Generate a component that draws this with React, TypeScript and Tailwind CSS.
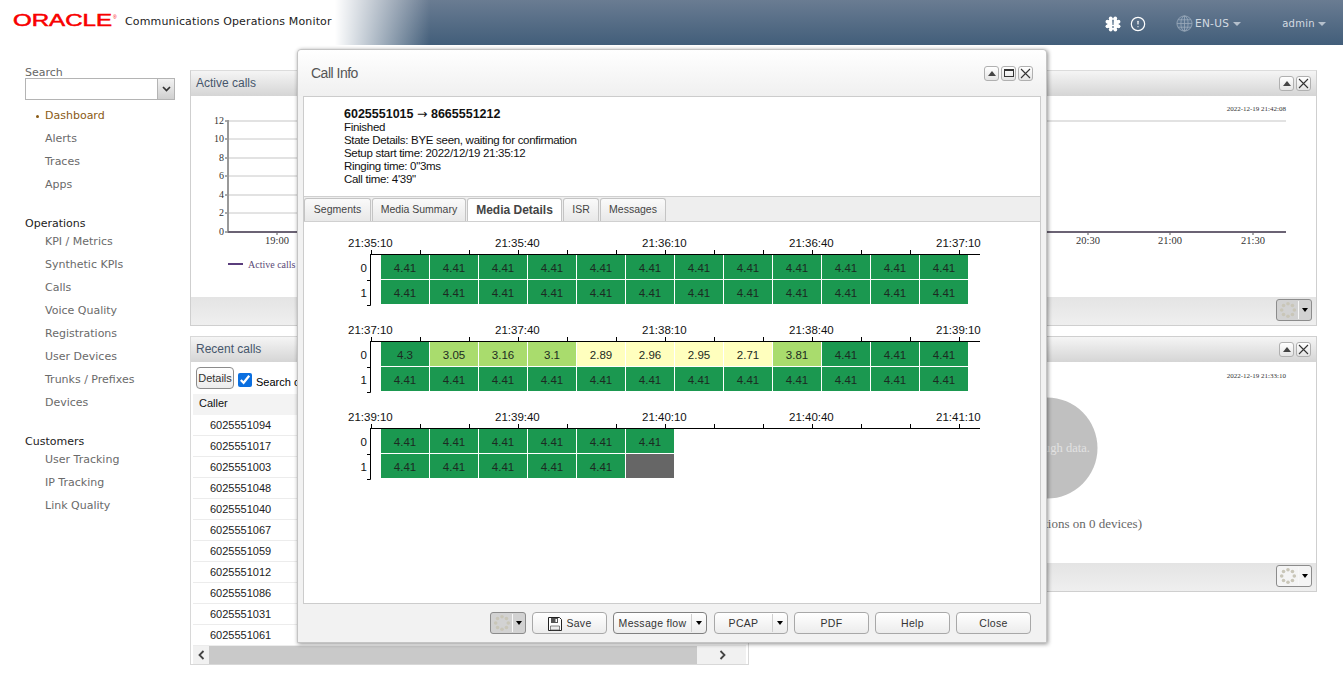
import { CircleAlert } from 'lucide-react'

const navMain = ['Alerts', 'Traces', 'Apps']
const navOps = ['KPI / Metrics', 'Synthetic KPIs', 'Calls', 'Voice Quality', 'Registrations', 'User Devices', 'Trunks / Prefixes', 'Devices']
const navCustomers = ['User Tracking', 'IP Tracking', 'Link Quality']
const callers = ['6025551094', '6025551017', '6025551003', '6025551048', '6025551040', '6025551067', '6025551059', '6025551012', '6025551086', '6025551031', '6025551061']

type Cell = { v: string; c: 'good' | 'mid' | 'low' | 'none' }

const good = (n: number): Cell[] => Array.from({ length: n }, () => ({ v: '4.41', c: 'good' as const }))

const blocks: { labels: string[]; rows: Cell[][] }[] = [
  {
    labels: ['21:35:10', '21:35:40', '21:36:10', '21:36:40', '21:37:10'],
    rows: [good(12), good(12)],
  },
  {
    labels: ['21:37:10', '21:37:40', '21:38:10', '21:38:40', '21:39:10'],
    rows: [
      [
        { v: '4.3', c: 'good' },
        { v: '3.05', c: 'mid' },
        { v: '3.16', c: 'mid' },
        { v: '3.1', c: 'mid' },
        { v: '2.89', c: 'low' },
        { v: '2.96', c: 'low' },
        { v: '2.95', c: 'low' },
        { v: '2.71', c: 'low' },
        { v: '3.81', c: 'mid' },
        ...good(3),
      ],
      good(12),
    ],
  },
  {
    labels: ['21:39:10', '21:39:40', '21:40:10', '21:40:40', '21:41:10'],
    rows: [good(6), [...good(5), { v: '', c: 'none' }]],
  },
]

const cellColor = {
  good: 'bg-[#1b9850]',
  mid: 'bg-[#a9dc6d]',
  low: 'bg-[#ffffbe]',
  none: 'bg-[#666666]',
}

function Spinner({ size = 20 }: { size?: number }) {
  const dots = [0, 45, 90, 135, 180, 225, 270, 315]
  return (
    <svg width={size} height={size} viewBox="0 0 20 20">
      {dots.map(a => (
        <circle
          key={a}
          cx={10 + 7 * Math.cos((a * Math.PI) / 180)}
          cy={10 + 7 * Math.sin((a * Math.PI) / 180)}
          r="2"
          fill="#c9c6b8"
        />
      ))}
    </svg>
  )
}

function Caret() {
  return <span className="h-0 w-0 border-x-[3px] border-t-[4px] border-x-transparent border-t-black" />
}

function GearButton({ active }: { active?: boolean }) {
  return (
    <button className={`flex h-[22px] w-[36px] items-center rounded-[3px] border border-[#8c8c8c] ${active ? 'bg-[#d2d2d2]' : 'bg-[#f4f4f4]'}`}>
      <span className="flex w-[21px] justify-center">
        <Spinner size={18} />
      </span>
      <span className="h-[18px] w-px bg-[#f8f8f8]" />
      <span className="flex flex-1 justify-center">
        <Caret />
      </span>
    </button>
  )
}

function WinButton({ kind }: { kind: 'up' | 'max' | 'close' }) {
  return (
    <span className="flex h-[15px] w-[15px] items-center justify-center rounded-[3px] border border-[#b0b0b0] bg-gradient-to-b from-white to-[#e4e4e4]">
      {kind === 'up' && <span className="h-0 w-0 border-x-[4px] border-b-[5px] border-x-transparent border-b-[#444]" />}
      {kind === 'max' && <span className="h-[8px] w-[10px] border border-t-2 border-[#333]" />}
      {kind === 'close' && (
        <svg width="11" height="11" viewBox="0 0 11 11">
          <path d="M1 1l9 9M10 1l-9 9" stroke="#333" strokeWidth="1.1" />
        </svg>
      )}
    </span>
  )
}

function PanelTitle({ title }: { title: string }) {
  return (
    <div className="flex h-[25px] items-center justify-between bg-gradient-to-b from-[#f5f5f5] to-[#d5d5d5] px-[5px]">
      <span className="pb-[2px] font-['Liberation_Sans'] text-[12px] text-[#46566b]">{title}</span>
      <span className="flex gap-[2px]">
        <WinButton kind="up" />
        <WinButton kind="close" />
      </span>
    </div>
  )
}

function PanelFooter({ active }: { active?: boolean }) {
  return (
    <div className="flex h-[28px] items-start justify-end bg-gradient-to-b from-[#e4e4e4] to-[#efefef] pr-[4px] pt-[2px]">
      <GearButton active={active} />
    </div>
  )
}

function NavList({ items }: { items: string[] }) {
  return (
    <ul>
      {items.map(item => (
        <li key={item} className="flex h-[23px] items-center pl-[45px] text-[#6a6a6a]">
          {item}
        </li>
      ))}
    </ul>
  )
}

function ActiveChart() {
  const ys = [
    { l: '12', y: 121, thick: true },
    { l: '10', y: 139, thick: false },
    { l: '8', y: 158, thick: true },
    { l: '6', y: 176, thick: false },
    { l: '4', y: 195, thick: true },
    { l: '2', y: 213, thick: false },
    { l: '0', y: 232, thick: false },
  ]
  return (
    <svg width="1125" height="201" viewBox="191 96 1125 201" className="block font-['Liberation_Serif']">
      <text x="1286" y="111" textAnchor="end" fontSize="7" fill="#333">2022-12-19 21:42:08</text>
      {ys.map(t => (
        <g key={t.l}>
          <text x="224" y={t.y + 3} textAnchor="end" fontSize="10" fill="#333">{t.l}</text>
          <line x1="225" x2="228" y1={t.y} y2={t.y} stroke="#555" />
          {t.l !== '0' && (
            <line
              x1="228"
              x2={t.l === '12' ? 1286 : 400}
              y1={t.y}
              y2={t.y}
              stroke={t.thick ? '#e2e2e2' : '#c8c8c8'}
              strokeWidth={t.thick ? 2 : 1}
            />
          )}
        </g>
      ))}
      <line x1="228" x2="228" y1="120" y2="233" stroke="#999" strokeWidth="2" />
      <line x1="228" x2="1286" y1="232" y2="232" stroke="#6b6374" strokeWidth="2" />
      {[
        { l: '19:00', x: 277 },
        { l: '20:30', x: 1088 },
        { l: '21:00', x: 1170 },
        { l: '21:30', x: 1253 },
      ].map(t => (
        <g key={t.l}>
          <line x1={t.x} x2={t.x} y1="233" y2="235" stroke="#555" />
          <text x={t.x} y="244" textAnchor="middle" fontSize="10.5" fill="#333">{t.l}</text>
        </g>
      ))}
      <line x1="228" x2="243" y1="264" y2="264" stroke="#5a3d7c" strokeWidth="2" />
      <text x="248" y="268" fontSize="10" fill="#5a4a76">Active calls</text>
    </svg>
  )
}

function DevicesChart() {
  return (
    <svg width="556" height="201" viewBox="760 362 556 201" className="block font-['Liberation_Serif']">
      <text x="1286" y="378" textAnchor="end" fontSize="7" fill="#333">2022-12-19 21:33:10</text>
      <circle cx="1047" cy="448" r="50.5" fill="#c0c0c0" />
      <text x="1047" y="452" textAnchor="middle" fontSize="12.5" fill="#e2e2e2">Not enough data.</text>
      <text x="1142" y="528" textAnchor="end" fontSize="13" fill="#666">0 users (0 registrations on 0 devices)</text>
    </svg>
  )
}

function Timeline({ labels, rows }: { labels: string[]; rows: Cell[][] }) {
  return (
    <div className="h-[87px] pl-[44px]">
      <div className="flex h-[15px] font-['Liberation_Sans'] text-[11.5px] leading-[17px] text-[#111]">
        {labels.map(l => (
          <span key={l} className="w-[147px] shrink-0 text-left">{l}</span>
        ))}
      </div>
      <svg width="612" height="5" className="ml-[22px] block">
        <line x1="0" x2="610" y1="4.5" y2="4.5" stroke="#000" />
        {Array.from({ length: 13 }, (_, i) => (
          <line key={i} x1={1.5 + i * 49} x2={1.5 + i * 49} y1="0" y2="5" stroke="#000" />
        ))}
      </svg>
      <div className="flex">
        <div className="flex w-[19px] flex-col pt-[6px] text-right font-['Liberation_Sans'] text-[11.5px] text-[#111]">
          <span className="h-[25px] leading-[14px]">0</span>
          <span className="h-[25px] leading-[14px]">1</span>
        </div>
        <svg width="4" height="51" className="block">
          <path d="M3.5 0V50.5H0M3.5 25.5H0" fill="none" stroke="#000" />
        </svg>
        <div className="ml-[10px] flex flex-col gap-px">
          {rows.map((row, r) => (
            <div key={r} className="flex h-[24px] gap-px">
              {row.map((cell, i) => (
                <span
                  key={i}
                  className={`flex w-[48px] items-center justify-center pt-[3px] font-['Liberation_Sans'] text-[11.5px] text-[#1c2a22] ${cellColor[cell.c]}`}
                >
                  {cell.v}
                </span>
              ))}
            </div>
          ))}
        </div>
      </div>
    </div>
  )
}

function FootButton({ label, width, split, icon, strong }: { label: string; width: string; split?: boolean; icon?: boolean; strong?: boolean }) {
  return (
    <button className={`flex h-[22px] items-center rounded-[4px] border bg-gradient-to-b from-white to-[#ececec] font-['Liberation_Sans'] text-[10.5px] tracking-[0.3px] text-[#333] ${strong ? 'border-[#808080]' : 'border-[#a8a8a8]'} ${width}`}>
      <span className="flex flex-1 items-center justify-center gap-[3px] pt-[1px]">
        {icon && (
          <svg width="16" height="16" viewBox="0 0 16 16">
            <path d="M1.5 1.5h11l2 2v11h-13z" fill="#fff" stroke="#222" />
            <path d="M4 2h7v5H4z" fill="#555" />
            <path d="M8.5 3h1.5v3H8.5z" fill="#fff" />
            <path d="M3.5 10h9v4h-9z" fill="#eee" stroke="#555" strokeWidth=".7" />
          </svg>
        )}
        {label}
      </span>
      {split && (
        <>
          <span className="h-[18px] w-px bg-[#cfcfcf]" />
          <span className="flex w-[14px] justify-center">
            <Caret />
          </span>
        </>
      )}
    </button>
  )
}

function BugIcon() {
  const spikes = Array.from({ length: 8 }, (_, i) => (i * 45 * Math.PI) / 180)
  return (
    <svg width="16" height="16" viewBox="0 0 16 16">
      <circle cx="8" cy="8" r="5.8" fill="#fff" />
      {spikes.map((a, i) => (
        <circle key={i} cx={8 + 6 * Math.cos(a + 0.39)} cy={8 + 6 * Math.sin(a + 0.39)} r="1.9" fill="#fff" />
      ))}
      <path d="M7.2 3.8h1.6l-.3 5.2H7.5zM7.2 10.2h1.6v1.6H7.2z" fill="#4f6a85" />
    </svg>
  )
}

function GlobeIcon() {
  return (
    <svg width="17" height="17" viewBox="0 0 17 17" fill="none" stroke="#9aa9ba" strokeWidth=".8">
      <circle cx="8.5" cy="8.5" r="7.6" fill="#5c7590" />
      <ellipse cx="8.5" cy="8.5" rx="3.6" ry="7.6" />
      <path d="M8.5 1v15M1 8.5h15M2 4.8h13M2 12.2h13" />
    </svg>
  )
}

export default function App() {
  return (
    <div className="relative h-[692px] w-full overflow-hidden bg-white font-['DejaVu_Sans',sans-serif] text-[11px]">
      <header className="flex h-[45px] bg-gradient-to-b from-[#6a7c92] to-[#425e7a]">
        <div className="flex w-[335px] items-center bg-white pl-[13px]">
          <svg width="108" height="18" viewBox="0 0 108 18" className="-mt-[6px] font-['Liberation_Sans']">
            <text x="0" y="15" fontSize="17" fontWeight="400" fill="#f80000" stroke="#f80000" strokeWidth=".55" textLength="99" lengthAdjust="spacingAndGlyphs">ORACLE</text>
            <text x="100" y="8" fontSize="5" fill="#f80000">®</text>
          </svg>
          <span className="ml-[4px] text-[11px] tracking-[0.15px] text-[#222]">Communications Operations Monitor</span>
        </div>
        <div className="w-[95px] bg-gradient-to-r from-white to-transparent" />
        <div className="flex flex-1 items-center justify-end pr-[17px] pt-[2px] text-[#d5dbe2]">
          <BugIcon />
          <CircleAlert size={16} strokeWidth={1.8} className="ml-[9px] text-white" />
          <span className="ml-[30px] flex items-center gap-[2px] text-[10.5px] tracking-[0.3px]">
            <GlobeIcon />
            EN-US
            <span className="ml-[2px] h-0 w-0 border-x-[4px] border-t-[4px] border-x-transparent border-t-[#b5c0cc]" />
          </span>
          <span className="ml-[41px] flex items-center gap-[3px] text-[10px] tracking-[0.3px]">
            admin
            <span className="h-0 w-0 border-x-[4px] border-t-[4px] border-x-transparent border-t-[#b5c0cc]" />
          </span>
        </div>
      </header>

      <div className="flex">
        <aside className="w-[190px] shrink-0 pt-[20px]">
          <div className="pl-[25px] text-[#666]">
            <div className="h-[13px] leading-[15px]">Search</div>
            <div className="flex h-[22px] w-[150px] border border-[#b4b4b4]">
              <span className="flex-1 bg-white" />
              <span className="flex w-[17px] items-center justify-center border-l border-[#b4b4b4] bg-gradient-to-b from-[#f2f2f2] to-[#cfcfcf]">
                <svg width="9" height="6" viewBox="0 0 9 6">
                  <path d="M1 1l3.5 3.5L8 1" fill="none" stroke="#333" strokeWidth="1.7" />
                </svg>
              </span>
            </div>
          </div>
          <div className="relative mt-[5px] flex h-[23px] items-center pl-[45px] text-[#8a5a14]">
            <span className="absolute left-[36px] h-[3px] w-[3px] rounded-full bg-[#8a5a14]" />
            Dashboard
          </div>
          <NavList items={navMain} />
          <div className="mt-[19px] h-[16px] pl-[25px] leading-[16px] text-[#222]">Operations</div>
          <div className="-mt-[1px]">
            <NavList items={navOps} />
          </div>
          <div className="mt-[19px] h-[16px] pl-[25px] leading-[16px] text-[#222]">Customers</div>
          <div className="-mt-[1px]">
            <NavList items={navCustomers} />
          </div>
        </aside>

        <main className="flex w-[1127px] flex-col gap-[10px] pt-[25px]">
          <section className="border border-[#cfcfcf] border-t-[#dcdcdc]">
            <PanelTitle title="Active calls" />
            <ActiveChart />
            <PanelFooter active />
          </section>

          <div className="flex gap-[10px]">
            <section className="flex h-[329px] w-[559px] flex-col border border-[#d8d8d8]">
              <PanelTitle title="Recent calls" />
              <div className="flex h-[32px] shrink-0 items-center gap-[4px] pl-[5px] font-['Liberation_Sans'] text-[11px] text-black">
                <button className="h-[22px] w-[38px] rounded-[4px] border border-[#8c8c8c] bg-gradient-to-b from-white to-[#ececec] text-[11px] text-[#333]">
                  Details
                </button>
                <input type="checkbox" checked readOnly className="mt-[3px] h-[14px] w-[14px] accent-[#0b6fe0]" />
                <span className="mt-[8px]">Search calls</span>
              </div>
              <div className="mx-[2px] flex h-[21px] shrink-0 items-center bg-[#f3f3f3] pb-[2px] pl-[6px] font-['Liberation_Sans'] text-[11px] text-[#111]">Caller</div>
              {callers.map(c => (
                <div key={c} className="mx-[2px] flex h-[21px] shrink-0 items-center border-b border-[#ececec] pl-[17px] font-['Liberation_Sans'] text-[11px] text-[#222]">
                  {c}
                </div>
              ))}
              <div className="mx-[2px] flex h-[18px] shrink-0 items-center bg-[#f1f1f1]">
                <span className="flex w-[16px] justify-center">
                  <svg width="7" height="10" viewBox="0 0 7 10"><path d="M5.5 1L1.5 5l4 4" fill="none" stroke="#444" strokeWidth="1.8" /></svg>
                </span>
                <span className="h-full w-[488px] bg-[#c9c9c9]" />
                <span className="flex flex-1 justify-end pr-[20px]">
                  <svg width="7" height="10" viewBox="0 0 7 10"><path d="M1.5 1l4 4-4 4" fill="none" stroke="#444" strokeWidth="1.8" /></svg>
                </span>
              </div>
            </section>

            <section className="h-[256px] flex-1 border border-[#cfcfcf]">
              <PanelTitle title="Devices" />
              <DevicesChart />
              <PanelFooter />
            </section>
          </div>
        </main>
      </div>

      <div className="absolute left-[297px] top-[49px] flex h-[594px] w-[750px] flex-col rounded-t-[4px] border border-[#c4c4c4] bg-[#f2f2f2] shadow-[1px_1px_4px_rgba(0,0,0,0.45)]">
        <div className="flex h-[46px] shrink-0 items-center justify-between rounded-t-[4px] bg-gradient-to-b from-white to-[#f0f0f0] px-[13px]">
          <span className="pt-[1px] font-['Liberation_Sans'] text-[14px] tracking-[-0.5px] text-[#555]">Call Info</span>
          <span className="flex gap-[2px]">
            <WinButton kind="up" />
            <WinButton kind="max" />
            <WinButton kind="close" />
          </span>
        </div>
        <div className="mx-[5px] flex h-[508px] shrink-0 flex-col border border-[#cccccc] bg-white">
          <div className="h-[99px] shrink-0 pl-[40px] pt-[10px] font-['Liberation_Sans'] text-[11.5px] leading-[13px] tracking-[-0.3px] text-[#111]">
            <div className="text-[12.5px] font-bold tracking-[0px]">
              6025551015 <span className="font-['DejaVu_Sans'] font-normal">→</span> 8665551212
            </div>
            <div>Finished</div>
            <div>State Details: BYE seen, waiting for confirmation</div>
            <div>Setup start time: 2022/12/19 21:35:12</div>
            <div>Ringing time: 0"3ms</div>
            <div>Call time: 4'39"</div>
          </div>
          <div className="flex h-[26px] shrink-0 items-end gap-[1px] border-y border-[#d0d0d0] bg-[#eeeeee] font-['Liberation_Sans'] text-[10.5px] text-[#444]">
            {[
              { l: 'Segments', w: 'w-[67px]' },
              { l: 'Media Summary', w: 'w-[94px]' },
              { l: 'Media Details', w: 'w-[95px]', active: true },
              { l: 'ISR', w: 'w-[36px]' },
              { l: 'Messages', w: 'w-[66px]' },
            ].map(tab => (
              <span
                key={tab.l}
                className={`flex h-[23px] items-center justify-center rounded-t-[3px] border border-b-0 border-[#c4c4c4] ${tab.w} ${tab.active ? 'bg-white text-[12px] font-bold' : 'bg-gradient-to-b from-[#fafafa] to-[#e8e8e8]'}`}
              >
                {tab.l}
              </span>
            ))}
          </div>
          <div className="pt-[13px]">
            {blocks.map(b => (
              <Timeline key={b.labels[0]} labels={b.labels} rows={b.rows} />
            ))}
          </div>
        </div>
        <div className="flex flex-1 items-center justify-end gap-[6px] pr-[15px]">
          <GearButton active />
          <FootButton label="Save" width="w-[75px]" icon />
          <FootButton label="Message flow" width="w-[94px]" split strong />
          <FootButton label="PCAP" width="ml-[1px] w-[74px]" split />
          <FootButton label="PDF" width="w-[75px]" />
          <FootButton label="Help" width="w-[75px]" />
          <FootButton label="Close" width="w-[75px]" />
        </div>
      </div>
    </div>
  )
}
